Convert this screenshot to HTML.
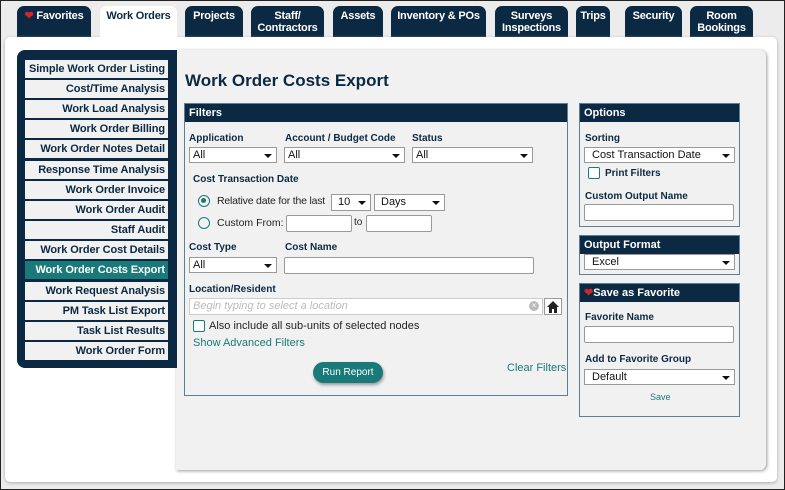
<!DOCTYPE html>
<html><head><style>
*{box-sizing:border-box;margin:0;padding:0}
body{width:785px;height:490px;overflow:hidden;background:#ececec;font-family:"Liberation Sans",Arial,sans-serif;position:relative}
.frame{position:absolute;left:0;top:0;width:785px;height:490px;border:1px solid #222;z-index:20;pointer-events:none}
.a{position:absolute}
.tab{position:absolute;top:6px;height:32px;background:#0b2942;color:#fff;font-weight:bold;font-size:11px;text-align:center;border-radius:7px 7px 0 0;line-height:12px;padding-top:4px;letter-spacing:-0.2px;white-space:nowrap}
.tab.on{background:#fff;color:#0b2942;height:34px;z-index:3}
.white{left:5px;top:37px;width:772px;height:445px;background:#fff;border-radius:5px;box-shadow:0 1px 3px #aaa}
.grey{left:176px;top:50px;width:590px;height:420px;background:#f1f1f1;border-radius:0 6px 6px 0;box-shadow:1px 1px 3px #999}
.side{left:17px;top:50px;width:160px;height:318px;background:#0b2942;border-radius:8px 0 0 8px}
.si{position:absolute;left:25px;width:143px;height:18px;background:#f1f1f1;color:#0b2942;font-weight:bold;font-size:11px;text-align:right;padding-right:3px;line-height:18px;white-space:nowrap;letter-spacing:-0.1px}
.si.on{background:#1a7a7a;color:#fff}
h1{position:absolute;left:185px;top:71px;font-size:17px;color:#0b2942;font-weight:bold}
.box{position:absolute;border:1px solid #5a7f99;background:#f1f1f1}
.hd{background:#0b2942;color:#fff;font-weight:bold;font-size:11px;height:18px;line-height:18px;padding-left:4px}
.lb{position:absolute;font-size:10px;font-weight:bold;color:#0b2942}
.sel{position:absolute;height:16px;background:#fff;border:1px solid #999;font-size:11px;color:#111;padding-left:3px;line-height:14px}
.sel:after{content:"";position:absolute;right:4px;top:6px;border-left:4px solid transparent;border-right:4px solid transparent;border-top:4px solid #111}
.inp{position:absolute;height:16px;background:#fff;border:1px solid #999;border-radius:2px}
.tx{position:absolute;font-size:11px;color:#222;white-space:nowrap}
.rad{position:absolute;width:12px;height:12px;border:1.5px solid #1a7a7a;border-radius:50%}
.cb{position:absolute;width:12px;height:12px;border:1.5px solid #1a7a7a;border-radius:2px;background:#fff}
.lnk{position:absolute;font-size:11px;color:#1a7a7a;white-space:nowrap}
</style></head><body>
<div class="frame"></div>
<div class="tab" style="left:17px;width:74px"><span style="color:#d0262c">&#10084;</span> Favorites</div>
<div class="tab on" style="left:100px;width:77px">Work Orders</div>
<div class="tab" style="left:185px;width:58px">Projects</div>
<div class="tab" style="left:251px;width:73px">Staff/<br>Contractors</div>
<div class="tab" style="left:333px;width:50px">Assets</div>
<div class="tab" style="left:391px;width:95px">Inventory &amp; POs</div>
<div class="tab" style="left:495px;width:73px">Surveys<br>Inspections</div>
<div class="tab" style="left:576px;width:34px">Trips</div>
<div class="tab" style="left:625px;width:57px">Security</div>
<div class="tab" style="left:690px;width:63px">Room<br>Bookings</div>
<div class="a white"></div>
<div class="a grey"></div>
<div class="a side"></div>
<div class="si" style="top:60px">Simple Work Order Listing</div>
<div class="si" style="top:80px">Cost/Time Analysis</div>
<div class="si" style="top:100px">Work Load Analysis</div>
<div class="si" style="top:120px">Work Order Billing</div>
<div class="si" style="top:140px">Work Order Notes Detail</div>
<div class="si" style="top:161px">Response Time Analysis</div>
<div class="si" style="top:181px">Work Order Invoice</div>
<div class="si" style="top:201px">Work Order Audit</div>
<div class="si" style="top:221px">Staff Audit</div>
<div class="si" style="top:241px">Work Order Cost Details</div>
<div class="si on" style="top:261px">Work Order Costs Export</div>
<div class="si" style="top:282px">Work Request Analysis</div>
<div class="si" style="top:302px">PM Task List Export</div>
<div class="si" style="top:322px">Task List Results</div>
<div class="si" style="top:342px">Work Order Form</div>
<h1>Work Order Costs Export</h1>

<div class="box" style="left:184px;top:103px;width:384px;height:293px"><div class="hd">Filters</div></div>
<div class="lb" style="left:189px;top:133px">Application</div>
<div class="lb" style="left:285px;top:133px">Account / Budget Code</div>
<div class="lb" style="left:412px;top:133px">Status</div>
<div class="sel" style="left:189px;top:147px;width:88px">All</div>
<div class="sel" style="left:284px;top:147px;width:121px">All</div>
<div class="sel" style="left:412px;top:147px;width:121px">All</div>
<div class="lb" style="left:193px;top:174px">Cost Transaction Date</div>
<div class="rad" style="left:198px;top:195px"><div style="position:absolute;left:2px;top:2px;width:5px;height:5px;border-radius:50%;background:#1a7a7a"></div></div>
<div class="tx" style="left:217px;top:195px;font-size:10.5px;letter-spacing:-0.2px">Relative date for the last</div>
<div class="sel" style="left:331px;top:194px;width:40px;height:17px;padding-left:6px">10</div>
<div class="sel" style="left:374px;top:194px;width:71px;height:17px;padding-left:6px">Days</div>
<div class="rad" style="left:198px;top:217px"></div>
<div class="tx" style="left:217px;top:217px;font-size:10.5px">Custom From:</div>
<div class="inp" style="left:286px;top:215px;width:66px;height:17px"></div>
<div class="tx" style="left:354px;top:217px;font-size:10px">to</div>
<div class="inp" style="left:366px;top:215px;width:66px;height:17px"></div>
<div class="lb" style="left:189px;top:242px">Cost Type</div>
<div class="lb" style="left:285px;top:242px">Cost Name</div>
<div class="sel" style="left:189px;top:257px;width:88px">All</div>
<div class="inp" style="left:284px;top:257px;width:250px;height:17px"></div>
<div class="lb" style="left:189px;top:284px">Location/Resident</div>
<div class="inp" style="left:189px;top:298px;width:354px;height:17px;border-radius:0;border-color:#ccc"><span style="font-size:11px;color:#bbb;font-style:italic;position:absolute;left:3px;top:1px">Begin typing to select a location</span><span style="position:absolute;right:3px;top:2px;width:10px;height:10px;border-radius:50%;background:#bbb;color:#fff;font-size:8px;line-height:10px;text-align:center">×</span></div>
<div class="a" style="left:544px;top:298px;width:18px;height:17px;background:#fff;border:1px solid #999"><svg width="16" height="15" viewBox="0 0 16 15"><path d="M8 2 L2 8 H4 V14 H7 V10 H9 V14 H12 V8 H14 Z" fill="#222"/></svg></div>
<div class="cb" style="left:193px;top:320px"></div>
<div class="tx" style="left:209px;top:320px">Also include all sub-units of selected nodes</div>
<div class="lnk" style="left:193px;top:337px">Show Advanced Filters</div>
<div class="a" style="left:313px;top:362px;width:70px;height:21px;border-radius:11px;background:#1a7a7a;color:#fff;font-size:10px;text-align:center;line-height:21px;box-shadow:1px 2px 3px #999">Run Report</div>
<div class="lnk" style="left:507px;top:362px">Clear Filters</div>

<div class="box" style="left:579px;top:103px;width:161px;height:124px"><div class="hd">Options</div></div>
<div class="lb" style="left:585px;top:133px">Sorting</div>
<div class="sel" style="left:584px;top:147px;width:151px;padding-left:7px">Cost Transaction Date</div>
<div class="cb" style="left:588px;top:167px"></div>
<div class="lb" style="left:605px;top:168px">Print Filters</div>
<div class="lb" style="left:585px;top:191px">Custom Output Name</div>
<div class="inp" style="left:584px;top:204px;width:150px;height:17px"></div>
<div class="box" style="left:579px;top:235px;width:161px;height:40px"><div class="hd">Output Format</div></div>
<div class="sel" style="left:584px;top:254px;width:151px;padding-left:7px">Excel</div>
<div class="box" style="left:579px;top:283px;width:161px;height:134px"><div class="hd"><span style="color:#d0262c">&#10084;</span>Save as Favorite</div></div>
<div class="lb" style="left:585px;top:312px">Favorite Name</div>
<div class="inp" style="left:584px;top:326px;width:150px;height:17px"></div>
<div class="lb" style="left:585px;top:354px">Add to Favorite Group</div>
<div class="sel" style="left:584px;top:369px;width:151px;padding-left:7px">Default</div>
<div class="lnk" style="left:650px;top:392px;font-size:9px">Save</div>
</body></html>
